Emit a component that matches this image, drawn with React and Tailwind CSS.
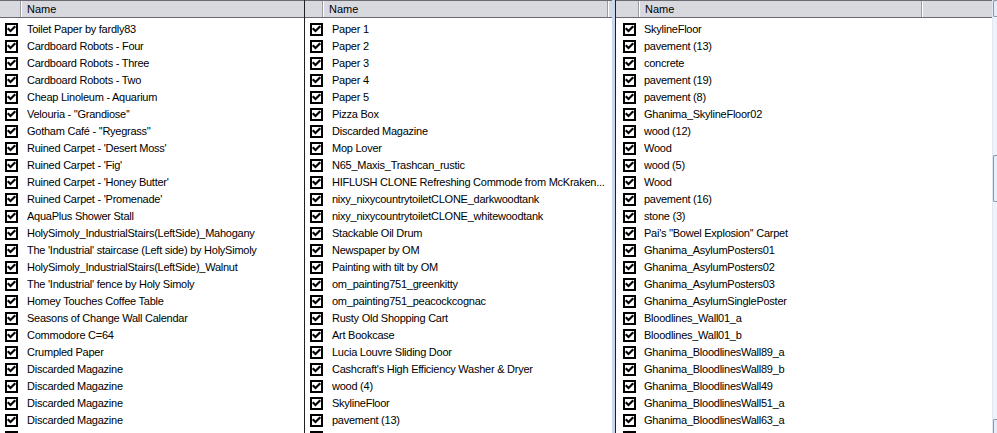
import React from 'react'

const col1 = [
  'Toilet Paper by fardly83',
  'Cardboard Robots - Four',
  'Cardboard Robots - Three',
  'Cardboard Robots - Two',
  'Cheap Linoleum - Aquarium',
  "Velouria - ''Grandiose''",
  "Gotham Café - ''Ryegrass''",
  "Ruined Carpet - 'Desert Moss'",
  "Ruined Carpet - 'Fig'",
  "Ruined Carpet - 'Honey Butter'",
  "Ruined Carpet - 'Promenade'",
  'AquaPlus Shower Stall',
  'HolySimoly_IndustrialStairs(LeftSide)_Mahogany',
  "The 'Industrial' staircase (Left side) by HolySimoly",
  'HolySimoly_IndustrialStairs(LeftSide)_Walnut',
  "The 'Industrial' fence by Holy Simoly",
  'Homey Touches Coffee Table',
  'Seasons of Change Wall Calendar',
  'Commodore C=64',
  'Crumpled Paper',
  'Discarded Magazine',
  'Discarded Magazine',
  'Discarded Magazine',
  'Discarded Magazine',
  '',
]

const col2 = [
  'Paper 1',
  'Paper 2',
  'Paper 3',
  'Paper 4',
  'Paper 5',
  'Pizza Box',
  'Discarded Magazine',
  'Mop Lover',
  'N65_Maxis_Trashcan_rustic',
  'HIFLUSH CLONE Refreshing Commode from McKraken...',
  'nixy_nixycountrytoiletCLONE_darkwoodtank',
  'nixy_nixycountrytoiletCLONE_whitewoodtank',
  'Stackable Oil Drum',
  'Newspaper by OM',
  'Painting with tilt by OM',
  'om_painting751_greenkitty',
  'om_painting751_peacockcognac',
  'Rusty Old Shopping Cart',
  'Art Bookcase',
  'Lucia Louvre Sliding Door',
  "Cashcraft's High Efficiency Washer & Dryer",
  'wood (4)',
  'SkylineFloor',
  'pavement (13)',
  '',
]

const col3 = [
  'SkylineFloor',
  'pavement (13)',
  'concrete',
  'pavement (19)',
  'pavement (8)',
  'Ghanima_SkylineFloor02',
  'wood (12)',
  'Wood',
  'wood (5)',
  'Wood',
  'pavement (16)',
  'stone (3)',
  "Pai's ''Bowel Explosion'' Carpet",
  'Ghanima_AsylumPosters01',
  'Ghanima_AsylumPosters02',
  'Ghanima_AsylumPosters03',
  'Ghanima_AsylumSinglePoster',
  'Bloodlines_Wall01_a',
  'Bloodlines_Wall01_b',
  'Ghanima_BloodlinesWall89_a',
  'Ghanima_BloodlinesWall89_b',
  'Ghanima_BloodlinesWall49',
  'Ghanima_BloodlinesWall51_a',
  'Ghanima_BloodlinesWall63_a',
  '',
]

const Check = () => (
  <svg width="13" height="13" viewBox="0 0 13 13" className="shrink-0">
    <rect x="0" y="0" width="13" height="13" fill="#000" />
    <rect x="2" y="2" width="9" height="9" fill="#fff" />
    <path d="M3.5 6 L5.5 8 L9.5 4" fill="none" stroke="#000" strokeWidth="2.2" strokeLinecap="square" />
  </svg>
)

const Header = ({ cbWidth, nameWidth }) => (
  <div className="flex h-[18px] shrink-0 bg-[#d8d8df] border-t border-t-[#6a6a70] border-b border-b-[#6a6a70]">
    <div className="h-full shrink-0 border-r border-r-[#9a9aa0]" style={{ width: cbWidth }} />
    <div
      className="h-full shrink-0 border-l border-l-white border-r border-r-[#9a9aa0] pl-[5px] flex items-center text-[11px] text-black leading-none"
      style={{ width: nameWidth }}
    >
      Name
    </div>
    <div className="h-full flex-1 border-l border-l-white" />
  </div>
)

const Rows = ({ items, cbPad, textLeft, textWidth }) => (
  <div className="pt-[3px]">
    {items.map((name, i) => (
      <div key={i} className="flex items-center h-[17px]">
        <div className="shrink-0 flex items-center" style={{ width: textLeft, paddingLeft: cbPad }}>
          <Check />
        </div>
        <div
          className="whitespace-nowrap overflow-hidden text-[11px] tracking-[-0.25px] text-black leading-none"
          style={{ width: textWidth }}
        >
          {name}
        </div>
      </div>
    ))}
  </div>
)

export default function App() {
  return (
    <div
      className="w-[997px] h-[433px] overflow-hidden flex bg-white"
      style={{ fontFamily: '"Liberation Sans", Arial, sans-serif' }}
    >
      {/* left list */}
      <div className="w-[305px] h-full shrink-0 flex flex-col border-r border-r-[#202020]">
        <Header cbWidth={21} nameWidth={400} />
        <Rows items={col1} cbPad={5} textLeft={27} textWidth={277} />
      </div>

      {/* middle list */}
      <div className="w-[310px] h-full shrink-0 flex">
        <div className="w-[307px] h-full flex flex-col">
          <Header cbWidth={18} nameWidth={285} />
          <Rows items={col2} cbPad={5} textLeft={27} textWidth={276} />
        </div>
        <div className="w-[3px] h-full bg-[#c9d8ee]" />
      </div>

      {/* right list */}
      <div className="flex-1 h-full flex border-l border-l-[#202020]">
        <div className="flex-1 h-full flex flex-col">
          <Header cbWidth={23} nameWidth={283} />
          <Rows items={col3} cbPad={7} textLeft={28} textWidth={340} />
        </div>
        <div className="w-[5px] h-full flex flex-col bg-[#eef3fb] border-l border-l-[#e0e8f4]">
          <div className="h-[17px] border border-[#8d99a8] border-r-0 rounded-l-[2px] bg-[#e6edf8]" />
          <div className="h-[138px]" />
          <div className="h-[47px] border border-[#8d99a8] border-r-0 rounded-l-[2px] bg-[#e8f0fb]" />
          <div className="flex-1" />
          <div className="h-[14px] border border-[#8d99a8] border-r-0 border-b-0 rounded-tl-[2px] bg-[#e6edf8]" />
        </div>
      </div>
    </div>
  )
}
